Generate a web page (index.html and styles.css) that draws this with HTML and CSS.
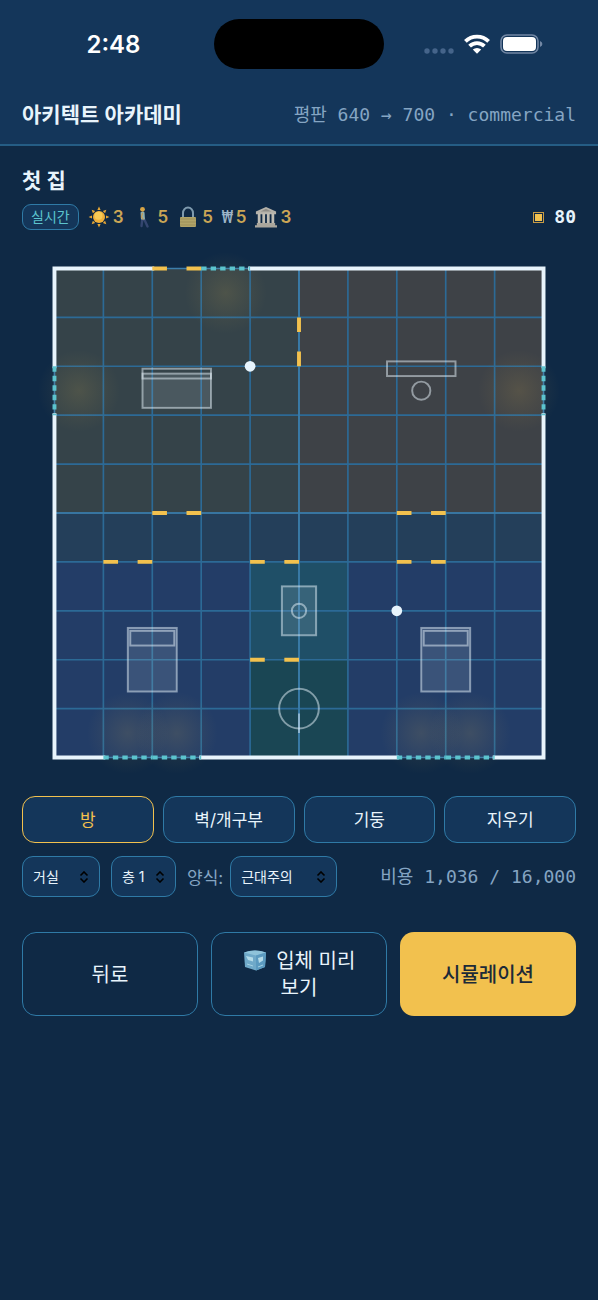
FILE: index.html
```html
<!DOCTYPE html>
<html lang="ko">
<head>
    <meta charset="UTF-8">
    <meta name="viewport" content="width=device-width, initial-scale=1.0">
    <title>아키텍트 아카데미</title>
    <link rel="stylesheet" href="styles.css">
</head>
<body>

    <header class="top">
        <div class="status-bar">
            <span class="clock">2:48</span>
            <span class="island"></span>
            <span class="signals">
                <svg width="30" height="6" viewBox="0 0 30 6" fill="#45648a"><circle cx="3" cy="3" r="2.700"/><circle cx="11" cy="3" r="2.700"/><circle cx="19" cy="3" r="2.700"/><circle cx="27" cy="3" r="2.700"/></svg>
                <svg width="26" height="20" viewBox="0 0 26 20" fill="none" stroke="#fff" stroke-width="3.800">
                    <path d="M1.400 7.400a16.400 16.400 0 0 1 23.200 0"/>
                    <path d="M5.600 12.200a10.500 10.500 0 0 1 14.800 0"/>
                    <path d="M13 19.800l-4.200-4.200a6 6 0 0 1 8.400 0z" fill="#fff" stroke="none"/>
                </svg>
                <svg width="43" height="20" viewBox="0 0 43 20">
                    <rect x="1" y="1" width="37" height="18" rx="6" fill="none" stroke="#7287a4" stroke-width="1.600"/>
                    <rect x="3" y="3" width="33" height="14" rx="4" fill="#fff"/>
                    <path d="M40 7v6q2.400-1 2.400-3t-2.400-3z" fill="#7287a4"/>
                </svg>
            </span>
        </div>
        <div class="title-bar">
            <h1>아키텍트 아카데미</h1>
            <span class="mono">평판 640 → 700 · commercial</span>
        </div>
    </header>

    <main>
        <h2>첫 집</h2>
        <div class="brief">
            <span class="badge">실시간</span>
            <span class="stat">
                <svg width="22" height="22" viewBox="0 0 22 22">
                    <g fill="#e9a935">
                        <path id="ray" d="M9.400 4L11 .6 12.600 4z"/>
                        <use href="#ray" transform="rotate(45 11 11)"/>
                        <use href="#ray" transform="rotate(90 11 11)"/>
                        <use href="#ray" transform="rotate(135 11 11)"/>
                        <use href="#ray" transform="rotate(180 11 11)"/>
                        <use href="#ray" transform="rotate(225 11 11)"/>
                        <use href="#ray" transform="rotate(270 11 11)"/>
                        <use href="#ray" transform="rotate(315 11 11)"/>
                    </g>
                    <circle cx="11" cy="11" r="6" fill="#f0b03a"/>
                    <circle cx="10.500" cy="9.800" r="4" fill="#f8cb55"/>
                </svg>3
            </span>
            <span class="stat">
                <svg width="22" height="22" viewBox="0 0 22 22">
                    <path d="M10.500 12l-1 8M11.500 12l2 4 2 4.500" stroke="#34466f" stroke-width="2.400" fill="none" stroke-linecap="round"/>
                    <path d="M8.500 6.500q3-2 4 0l.5 7H9z" fill="#8fb0b0"/>
                    <path d="M10.500 7l-1 4 2 2.500" stroke="#c79b52" stroke-width="1.200" fill="none"/>
                    <circle cx="10.500" cy="3.300" r="2.400" fill="#d9a545"/>
                </svg>5
            </span>
            <span class="stat">
                <svg width="22" height="22" viewBox="0 0 22 22">
                    <path d="M6 12V7a5 5.500 0 0 1 10 0v5" fill="none" stroke="#7e9aae" stroke-width="2"/>
                    <rect x="3" y="11" width="16" height="10" rx="1" fill="#b1a468"/>
                    <path d="M3 13h16M3 16h16M3 19h16" stroke="#958b58" stroke-width=".7"/>
                </svg>5
            </span>
            <span class="stat"><span class="won mono">₩</span>5</span>
            <span class="stat">
                <svg width="22" height="24" viewBox="0 0 24 24">
                    <path d="M12 1L1 6v3h22V6z" fill="#b5b2aa"/>
                    <path d="M12 3L6 6h12z" fill="#8e8c86"/>
                    <path d="M4.500 8v11M9.500 8v11M14.500 8v11M19.500 8v11" stroke="#bfbcb3" stroke-width="3"/>
                    <path d="M2 18.500h20V21H2zM0 21h24v2.500H0z" fill="#aaa69c"/>
                </svg>3
            </span>
            <span class="coins mono">
                <svg width="11" height="11" viewBox="0 0 11 11"><rect x=".5" y=".5" width="10" height="10" fill="none" stroke="#c79b45"/><rect x="2" y="2" width="7" height="7" fill="#f2c14e"/></svg>
                80
            </span>
        </div>

        <!-- one grid cell = 50 units -->
        <svg class="plan" viewBox="-33.2 -33.2 566.4 566.4" role="img" aria-label="평면도">
            <defs>
                <radialGradient id="glow">
                    <stop offset="0" stop-color="#f2c14e" stop-opacity=".13"/>
                    <stop offset=".5" stop-color="#f2c14e" stop-opacity=".06"/>
                    <stop offset="1" stop-color="#f2c14e" stop-opacity="0"/>
                </radialGradient>
                <path id="door" d="M0 0h15M35 0h15"/>
                <path id="window" d="M0 0h50" stroke-dasharray="5.500 4.200"/>
                <g id="bed">
                    <rect width="50" height="65" class="solid"/>
                    <rect x="2.500" y="3" width="45" height="15"/>
                </g>
            </defs>

            <!-- rooms -->
            <rect width="250" height="250" fill="#354349"/>
            <rect x="250" width="250" height="250" fill="#3e4247"/>
            <rect y="250" width="500" height="50" fill="#243f5a"/>
            <rect y="300" width="200" height="200" fill="#233d67"/>
            <rect x="300" y="300" width="200" height="200" fill="#233d67"/>
            <rect x="200" y="300" width="100" height="100" fill="#1f4f67"/>
            <rect x="200" y="400" width="100" height="100" fill="#1a4654"/>

            <!-- grid -->
            <path class="grid" d="M0 50h500M0 100h500M0 150h500M0 200h500M0 250h500M0 300h500M0 350h500M0 400h500M0 450h500M50 0v500M100 0v500M150 0v500M200 0v500M250 0v500M300 0v500M350 0v500M400 0v500M450 0v500"/>
            <path class="grid strong" d="M0 250h500M250 0v500M100 0h100M0 100v50M500 100v50M50 500h100M350 500h100"/>

            <!-- daylight -->
            <g fill="url(#glow)">
                <circle cx="175" cy="25" r="42"/>
                <circle cx="25" cy="125" r="42"/>
                <circle cx="475" cy="125" r="42"/>
                <circle cx="75" cy="475" r="42"/>
                <circle cx="125" cy="475" r="42"/>
                <circle cx="375" cy="475" r="42"/>
                <circle cx="425" cy="475" r="42"/>
            </g>

            <g class="furniture">
                <rect x="90" y="107.500" width="70" height="35" class="solid"/>
                <rect x="90" y="102.500" width="70" height="10"/>
                <rect x="340" y="95" width="70" height="15"/>
                <circle cx="375" cy="125" r="9.300"/>
                <rect x="232.500" y="325" width="35" height="50" class="solid"/>
                <circle cx="250" cy="350" r="7.300"/>
                <use href="#bed" x="75" y="367.500"/>
                <use href="#bed" x="375" y="367.500"/>
                <circle cx="250" cy="450" r="20.300"/>
                <path d="M250 455v20"/>
            </g>

            <path class="wall" d="M0 0h100M200 0h300M0 0v100M0 150v350M500 0v100M500 150v350M0 500h50M150 500h200M450 500h50"/>

            <g class="windows">
                <use href="#window" x="150" y="0"/>
                <use href="#window" transform="translate(0 100) rotate(90)"/>
                <use href="#window" transform="translate(500 100) rotate(90)"/>
                <use href="#window" x="50" y="500"/>
                <use href="#window" x="100" y="500"/>
                <use href="#window" x="350" y="500"/>
                <use href="#window" x="400" y="500"/>
            </g>

            <g class="doors">
                <use href="#door" x="100" y="0"/>
                <use href="#door" transform="translate(250 50) rotate(90)"/>
                <use href="#door" x="100" y="250"/>
                <use href="#door" x="350" y="250"/>
                <use href="#door" x="50" y="300"/>
                <use href="#door" x="200" y="300"/>
                <use href="#door" x="350" y="300"/>
                <use href="#door" x="200" y="400"/>
            </g>

            <g class="pillars">
                <circle cx="200" cy="100" r="5.500"/>
                <circle cx="350" cy="350" r="5.500"/>
            </g>
        </svg>

        <div class="tools">
            <button class="active">방</button>
            <button>벽/개구부</button>
            <button>기둥</button>
            <button>지우기</button>
        </div>

        <div class="options">
            <select class="room" aria-label="방 종류"><option>거실</option></select>
            <select class="floor" aria-label="층"><option>층 1</option></select>
            <label for="style">양식:</label>
            <select class="style" id="style"><option>근대주의</option></select>
            <span class="cost mono">비용 1,036 / 16,000</span>
        </div>

        <div class="actions">
            <button>뒤로</button>
            <button>
                <svg width="24" height="22" viewBox="0 0 24 22">
                    <path d="M1 3.500Q12-.5 23 3.500L22 18l-9 3.500L2 18z" fill="#6fa9c9"/>
                    <path d="M1 3.500Q12-.5 23 3.500L13 6.500z" fill="#8fc3da"/>
                    <path d="M13 6.500l10-3L22 18l-9 3.500z" fill="#5b9ac0"/>
                    <path d="M3 7l7 1.500v4L5 11zM15 9l5-1.500v4L16 14z" fill="#b4dbe9"/>
                    <path d="M4 15l6 2M15 18l5-2" stroke="#a5d2e3" fill="none"/>
                </svg>
                입체 미리<br>보기
            </button>
            <button class="primary">시뮬레이션</button>
        </div>
    </main>

</body>
</html>
```
FILE: styles.css
```css
* { box-sizing: border-box; }
body {
    margin: 0;
    min-height: 100vh;
    background: #0f2945;
    color: #e8f4fc;
    font-family: Inter, "Noto Sans CJK KR", sans-serif;
}
h1, h2 { margin: 0; font-weight: 600; }
svg { flex-shrink: 0; }
button, select { font-family: inherit; color: inherit; }
.mono { font-family: "DejaVu Sans Mono", "Noto Sans CJK KR", monospace; font-size: 18px; line-height: 26px; }

/* header */
.top { background: #14365a; border-bottom: 2px solid #255d85; }
.status-bar {
    display: grid;
    grid-template-columns: 1fr 170px 1fr;
    align-items: center;
    height: 88px;
    color: #fff;
}
.clock { justify-self: center; padding-left: 13px; font-size: 24px; font-weight: 600; }
.island { height: 50px; border-radius: 25px; background: #000; }
.signals { display: flex; align-items: center; gap: 10px; padding-left: 40px; }
.signals svg:first-child { margin-top: 13px; }
.title-bar {
    display: flex;
    justify-content: space-between;
    align-items: center;
    height: 56px;
    padding: 0 22px 2px;
}
.title-bar h1 { font-size: 21px; line-height: 30px; }
.title-bar .mono { color: #85a5c3; }

main { padding: 20px 22px; }
h2 { font-size: 21px; line-height: 30px; }

/* brief */
.brief { display: flex; align-items: center; gap: 9px; height: 26px; margin-top: 8px; }
.badge {
    padding: 0 8px;
    border: 1px solid #2f7aa6;
    border-radius: 9px;
    background: #14365a;
    color: #5cc4ce;
    font-size: 14px;
    line-height: 24px;
}
.stat { display: flex; align-items: center; gap: 3px; color: #cba655; font-size: 17px; font-weight: 600; }
.won { color: #9db4c8; font-weight: 400; }
.coins { display: flex; align-items: center; gap: 10px; margin-left: auto; font-weight: 700; }

/* floor plan */
.plan { display: block; width: 100%; height: auto; margin: 6px 0; }
.grid { stroke: #2c6a96; stroke-width: 1.7; }
.strong { stroke: #3c7eab; }
.wall { stroke: #e8f4fc; stroke-width: 4; stroke-linecap: square; }
.windows { stroke: #5cc4ce; stroke-width: 4; }
.doors { stroke: #f2c14e; stroke-width: 4; }
.furniture { fill: none; stroke: #e8f4fc; stroke-opacity: .5; stroke-width: 2; }
.solid { fill: #e8f4fc; fill-opacity: .12; }
.pillars { fill: #e8f4fc; }

/* controls */
.tools { display: grid; grid-template-columns: repeat(4, 1fr); gap: 9px; }
.tools button {
    height: 47px;
    padding: 0 0 3px;
    border: 1px solid #2f7aa6;
    border-radius: 13px;
    background: #14365a;
    font-size: 17px;
}
.tools .active { border-color: #f2c14e; color: #f2c14e; }

.options { display: flex; align-items: center; margin-top: 13px; }
select {
    appearance: none;
    height: 41px;
    padding: 0 10px;
    border: 1px solid #2f7aa6;
    border-radius: 11px;
    background: #14365a url('data:image/svg+xml,<svg xmlns="http://www.w3.org/2000/svg" width="10" height="12" viewBox="0 0 10 12"><path d="M1.500 4.500L5 1l3.500 3.500M1.500 7.500L5 11l3.500-3.500" fill="none" stroke="black" stroke-width="1.600"/></svg>') no-repeat right 10px center;
    font-size: 14px;
}
.room { width: 78px; margin-right: 11px; }
.floor { width: 65px; margin-right: 11px; }
.options label { margin-right: 7px; color: #85a5c3; font-size: 17px; }
.style { width: 107px; }
.cost { margin-left: auto; color: #85a5c3; }

.actions { display: grid; grid-template-columns: repeat(3, 1fr); gap: 13px; margin-top: 35px; }
.actions button {
    height: 84px;
    padding: 2px 6px 0;
    border: 1px solid #2f7aa6;
    border-radius: 14px;
    background: none;
    font-size: 20px;
    line-height: 27px;
}
.actions svg { margin-right: 4px; vertical-align: -3px; }
.actions .primary { border: none; background: #f2c14e; color: #1c2a38; font-weight: 500; }
```
